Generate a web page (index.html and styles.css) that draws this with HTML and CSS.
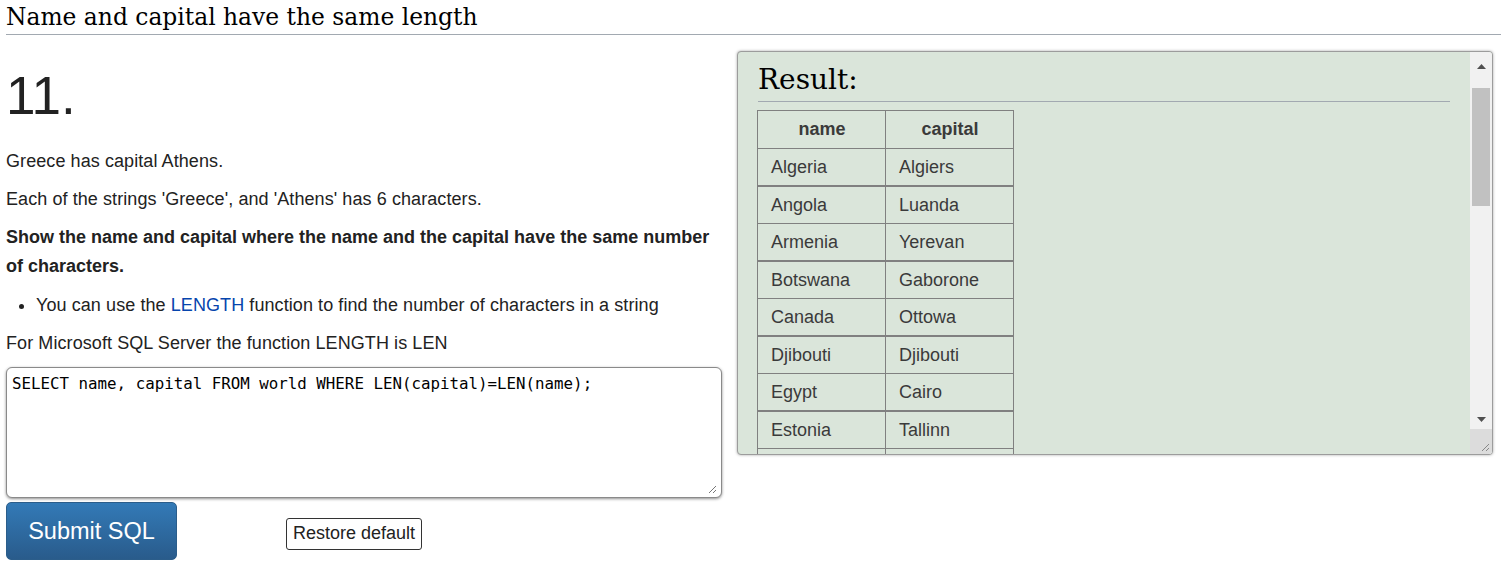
FILE: index.html
```html
<!DOCTYPE html>
<html>
<head>
<meta charset="utf-8">
<link rel="stylesheet" href="styles.css">
</head>
<body>
<h2 class="title">Name and capital have the same length</h2>
<div class="row">
  <div class="left">
    <div class="num">11.</div>
    <p>Greece has capital Athens.</p>
    <p>Each of the strings 'Greece', and 'Athens' has 6 characters.</p>
    <p class="bold">Show the name and capital where the name and the capital have the same number of characters.</p>
    <ul>
      <li>You can use the <a class="link">LENGTH</a> function to find the number of characters in a string</li>
    </ul>
    <p>For Microsoft SQL Server the function LENGTH is LEN</p>
    <div class="editor">
      <div class="code">SELECT name, capital FROM world WHERE LEN(capital)=LEN(name);</div>
      <svg class="grip" width="10" height="10" viewBox="0 0 10 10"><path d="M9 2 L2 9 M9 6 L6 9" stroke="#777" stroke-width="1"/></svg>
    </div>
    <div class="buttons">
      <button class="submit">Submit SQL</button>
      <button class="restore">Restore default</button>
    </div>
  </div>
  <div class="panel">
    <div class="content">
      <h2 class="result">Result:</h2>
      <table>
        <thead><tr><th>name</th><th>capital</th></tr></thead>
        <tbody>
          <tr class="a"><td>Algeria</td><td>Algiers</td></tr>
          <tr><td>Angola</td><td>Luanda</td></tr>
          <tr class="a"><td>Armenia</td><td>Yerevan</td></tr>
          <tr><td>Botswana</td><td>Gaborone</td></tr>
          <tr class="a"><td>Canada</td><td>Ottowa</td></tr>
          <tr><td>Djibouti</td><td>Djibouti</td></tr>
          <tr class="a"><td>Egypt</td><td>Cairo</td></tr>
          <tr><td>Estonia</td><td>Tallinn</td></tr>
          <tr class="a"><td></td><td></td></tr>
        </tbody>
      </table>
    </div>
    <div class="scrollbar">
      <div class="arrow up"><svg width="9" height="5" viewBox="0 0 9 5"><path d="M0 5 L4.5 0 L9 5 Z" fill="#505050"/></svg></div>
      <div class="track"><div class="thumb"></div></div>
      <div class="arrow down"><svg width="9" height="5" viewBox="0 0 9 5"><path d="M0 0 L4.5 5 L9 0 Z" fill="#505050"/></svg></div>
      <div class="corner"><svg width="10" height="10" viewBox="0 0 10 10"><path d="M9 2 L2 9 M9 6 L6 9" stroke="#888" stroke-width="1"/></svg></div>
    </div>
  </div>
</div>
</body>
</html>
```
FILE: styles.css
```css
html, body {
  margin: 0;
  padding: 0;
  background: #fff;
}
body {
  padding: 0 0 0 6px;
  font-family: "Liberation Sans", Arial, sans-serif;
  color: #222;
}
.title {
  margin: 0;
  padding: 3px 0 3px 0;
  font-family: "DejaVu Serif", Georgia, serif;
  font-weight: normal;
  font-size: 23.4px;
  line-height: 28px;
  color: #000;
  border-bottom: 1px solid #a2a9b1;
}
.row {
  display: flex;
  align-items: flex-start;
  gap: 14px;
}
.left {
  width: 717px;
  flex: none;
}
.num {
  font-size: 53px;
  line-height: 60px;
  margin-top: 31px;
  margin-bottom: 20.6px;
  color: #222;
}
p {
  margin: 0 0 9.6px 0;
  font-size: 18px;
  line-height: 28.8px;
  letter-spacing: 0.08px;
}
.bold {
  font-weight: bold;
  letter-spacing: 0;
}
ul {
  margin: 0 0 9.6px 0;
  padding-left: 30px;
  font-size: 18px;
  line-height: 28.8px;
  letter-spacing: 0.08px;
}
.link {
  color: #0645ad;
}
.editor {
  height: 129px;
  border: 1px solid #8a8a8a;
  border-radius: 6px;
  box-shadow: 0 1px 3px rgba(0, 0, 0, 0.45);
  background: #fff;
  position: relative;
  width: 714px;
}
.code {
  font-family: "DejaVu Sans Mono", monospace;
  font-size: 15.8px;
  line-height: 18px;
  padding: 7px 5px;
  color: #000;
}
.grip {
  position: absolute;
  right: 4px;
  bottom: 3px;
}
.buttons {
  display: flex;
  align-items: center;
  margin-top: 4px;
}
.submit {
  width: 171px;
  height: 58px;
  border: 1px solid #2b5d8a;
  border-radius: 5px;
  background: linear-gradient(#337ab7, #295b8b);
  color: #fff;
  font-family: "Liberation Sans", Arial, sans-serif;
  font-size: 23.5px;
  padding: 0;
}
.restore {
  margin-left: 109px;
  margin-top: 5px;
  height: 32px;
  padding: 0 6px;
  border: 1px solid #333;
  border-radius: 3px;
  background: #fff;
  color: #222;
  font-family: "Liberation Sans", Arial, sans-serif;
  font-size: 18px;
}
.panel {
  margin-top: 16px;
  width: 754px;
  height: 402px;
  border: 1px solid #9c9c9c;
  border-radius: 4px;
  box-shadow: 0 0 3px rgba(0, 0, 0, 0.35);
  background: #dae5da;
  display: flex;
  overflow: hidden;
}
.content {
  flex: 1;
  padding: 0 20px 0 20px;
  overflow: hidden;
}
.result {
  margin: 8px 0 8px 0;
  font-family: "DejaVu Serif", Georgia, serif;
  font-weight: normal;
  font-size: 28px;
  line-height: 40px;
  color: #000;
  border-bottom: 1px solid #a2a9b1;
  padding-bottom: 1px;
}
table {
  border-collapse: collapse;
  color: #3a3a3a;
  font-size: 18px;
  margin-left: -1px;
}
th, td {
  border: 1px solid #808080;
  width: 102px;
  padding: 0 12px 0 13px;
  height: 36px;
  text-align: left;
}
th {
  text-align: center;
  font-size: 18px;
  height: 37px;
}
tr.a td {
  border-bottom-width: 2px;
}
.scrollbar {
  width: 22px;
  display: flex;
  flex-direction: column;
  background: #f1f1f1;
  flex: none;
}
.arrow {
  height: 20px;
  display: flex;
  align-items: center;
  justify-content: center;
}
.up { height: 24px; padding-top: 2px; }
.track {
  flex: 1;
  padding: 10px 2px 0 2px;
}
.thumb {
  height: 118px;
  background: #c1c1c1;
}
.corner {
  height: 23px;
  background: #dcdcdc;
  display: flex;
  align-items: flex-end;
  justify-content: flex-end;
  padding: 0 2px 2px 0;
}
```
